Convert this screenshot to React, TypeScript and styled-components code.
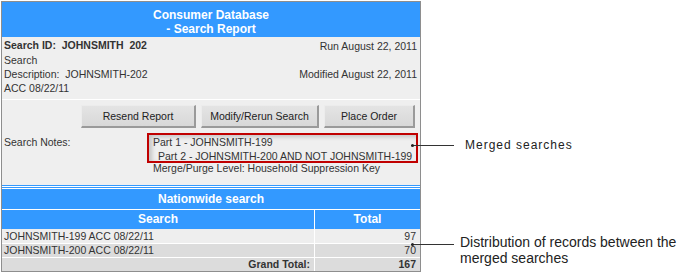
import React from 'react'
import styled, {createGlobalStyle} from 'styled-components'

const GlobalStyle = createGlobalStyle`
    body {
        margin: 0;
        background: #ffffff;
        font-family: "Liberation Sans", Arial, sans-serif;
        color: #333333;
    }
`

const Page = styled.div`
    position: relative;
    width: 686px;
    height: 274px;
    padding: 1px 0 0 1px;
    box-sizing: border-box;
    overflow: hidden;
`

const Panel = styled.div`
    width: 420px;
    box-sizing: border-box;
    border: 1px solid #8e8e8e;
    background: #efefef;
    font-size: 10.5px;
`

const Header = styled.div`
    background: #3399ff;
    color: #ffffff;
    font-weight: bold;
    font-size: 12px;
    line-height: 14px;
    text-align: center;
    height: 35px;
    padding-top: 6px;
    box-sizing: border-box;
`

const Info = styled.div`
    display: grid;
    grid-template-columns: 1fr auto;
    grid-template-rows: 15px auto;
    padding: 1px 3px 4px 2px;
    line-height: 14px;
    border-bottom: 1px solid #ffffff;
`

const InfoLeft = styled.div<{$bold?: boolean}>`
    font-weight: ${p => (p.$bold ? 'bold' : 'normal')};
    line-height: 15px;
    & > span {
        display: block;
        line-height: 14px;
    }
`

const InfoRight = styled.div`
    text-align: right;
    align-self: center;
`

const ButtonBar = styled.div`
    display: flex;
    justify-content: flex-end;
    gap: 5px;
    padding: 5px 5px 0 0;
`

const Button = styled.button<{$w: number}>`
    width: ${p => p.$w}px;
    height: 23px;
    box-sizing: border-box;
    font-family: "Liberation Sans", Arial, sans-serif;
    font-size: 10.5px;
    color: #222222;
    background: linear-gradient(#e4e4e4, #d8d8d8);
    border: 1px solid #ececec;
    border-right: 2px solid #9a9a9a;
    border-bottom: 2px solid #9a9a9a;
    padding: 0;
`

const Notes = styled.div`
    display: grid;
    grid-template-columns: 143px 1fr;
    padding: 5px 4px 0 2px;
    line-height: 14px;
    height: 57px;
    box-sizing: border-box;
    white-space: nowrap;
`

const NotesLabel = styled.div`
    padding-top: 2px;
`

const Highlight = styled.div`
    border: 2px solid #c00000;
    padding: 0 4px 0 4px;
    height: 30px;
    box-sizing: border-box;
    box-shadow: inset 3px 2px 4px rgba(0, 0, 0, 0.18);
`

const NoteLine = styled.div<{$indent?: number}>`
    padding-left: ${p => p.$indent || 0}px;
`

const MergeLine = styled.div`
    padding-left: 6px;
    margin-top: -2px;
`

const DoubleRule = styled.div`
    height: 1px;
    border-top: 1px solid #3399ff;
    border-bottom: 1px solid #3399ff;
    background: #ffffff;
    box-shadow: 0 1px 0 #ffffff;
    margin-bottom: 1px;
`

const Table = styled.table`
    width: 100%;
    border-collapse: separate;
    border-spacing: 0;
    font-size: 10.5px;
`

const Caption = styled.td`
    background: #3399ff;
    color: #ffffff;
    font-weight: bold;
    font-size: 12px;
    text-align: center;
    height: 20px;
    line-height: 20px;
    padding: 0;
    border-bottom: 1px solid #ffffff;
`

const HeadCell = styled.th<{$first?: boolean}>`
    background: #3399ff;
    color: #ffffff;
    font-size: 12px;
    height: 19px;
    line-height: 19px;
    padding: 0;
    width: ${p => (p.$first ? '312px' : 'auto')};
    border-right: ${p => (p.$first ? '1px solid #ffffff' : 'none')};
`

const Cell = styled.td<{$shade?: boolean; $num?: boolean; $first?: boolean; $bold?: boolean; $h: number}>`
    background: ${p => (p.$shade ? '#dcdcdc' : '#eeeeee')};
    text-align: ${p => (p.$num ? 'right' : 'left')};
    font-weight: ${p => (p.$bold ? 'bold' : 'normal')};
    height: ${p => p.$h}px;
    line-height: ${p => p.$h}px;
    padding: 0 4px 0 2px;
    border-right: ${p => (p.$first ? '1px solid #ffffff' : 'none')};
    border-bottom: 1px solid #ffffff;
`

const LastCell = styled(Cell)`
    border-bottom: none;
`

const Callout = styled.div<{$top: number}>`
    position: absolute;
    left: 411px;
    top: ${p => p.$top}px;
    display: flex;
    align-items: flex-start;
`

const Pointer = styled.div<{$offset: number}>`
    position: relative;
    width: 43px;
    height: 1px;
    background: #333333;
    margin-top: ${p => p.$offset}px;
    &::before {
        content: '';
        position: absolute;
        left: 0;
        top: -1px;
        width: 3px;
        height: 3px;
        border-radius: 50%;
        background: #222222;
    }
`

const CalloutText = styled.div<{$spaced?: boolean; $gap: number}>`
    margin-left: ${p => p.$gap}px;
    font-size: ${p => (p.$spaced ? '12px' : '14px')};
    letter-spacing: ${p => (p.$spaced ? '1px' : '0')};
    line-height: 16px;
    color: #222222;
`

const App = () => {
    return (
        <Page>
            <GlobalStyle/>
            <Panel>
                <Header>
                    Consumer Database
                    <br/>
                    - Search Report
                </Header>
                <Info>
                    <InfoLeft $bold>Search ID:&nbsp; JOHNSMITH&nbsp; 202</InfoLeft>
                    <InfoRight>Run August 22, 2011</InfoRight>
                    <InfoLeft>
                        <span>Search</span>
                        <span>Description:&nbsp; JOHNSMITH-202</span>
                        <span>ACC 08/22/11</span>
                    </InfoLeft>
                    <InfoRight>Modified August 22, 2011</InfoRight>
                </Info>
                <ButtonBar>
                    <Button $w={115}>Resend Report</Button>
                    <Button $w={118}>Modify/Rerun Search</Button>
                    <Button $w={91}>Place Order</Button>
                </ButtonBar>
                <Notes>
                    <NotesLabel>Search Notes:</NotesLabel>
                    <div>
                        <Highlight>
                            <NoteLine>Part 1 - JOHNSMITH-199</NoteLine>
                            <NoteLine $indent={5}>Part 2 - JOHNSMITH-200 AND NOT JOHNSMITH-199</NoteLine>
                        </Highlight>
                        <MergeLine>Merge/Purge Level: Household Suppression Key</MergeLine>
                    </div>
                </Notes>
                <DoubleRule/>
                <Table>
                    <tbody>
                    <tr>
                        <Caption colSpan={2}>Nationwide search</Caption>
                    </tr>
                    <tr>
                        <HeadCell $first>Search</HeadCell>
                        <HeadCell>Total</HeadCell>
                    </tr>
                    <tr>
                        <Cell $first $h={14}>JOHNSMITH-199 ACC 08/22/11</Cell>
                        <Cell $num $h={14}>97</Cell>
                    </tr>
                    <tr>
                        <Cell $first $shade $h={13}>JOHNSMITH-200 ACC 08/22/11</Cell>
                        <Cell $num $shade $h={13}>70</Cell>
                    </tr>
                    <tr>
                        <LastCell $first $shade $num $bold $h={13}>Grand Total:</LastCell>
                        <LastCell $num $shade $bold $h={13}>167</LastCell>
                    </tr>
                    </tbody>
                </Table>
            </Panel>
            <Callout $top={137}>
                <Pointer $offset={8}/>
                <CalloutText $spaced $gap={11}>Merged searches</CalloutText>
            </Callout>
            <Callout $top={234}>
                <Pointer $offset={10}/>
                <CalloutText $gap={6}>
                    Distribution of records between the
                    <br/>
                    merged searches
                </CalloutText>
            </Callout>
        </Page>
    )
}

export default App
